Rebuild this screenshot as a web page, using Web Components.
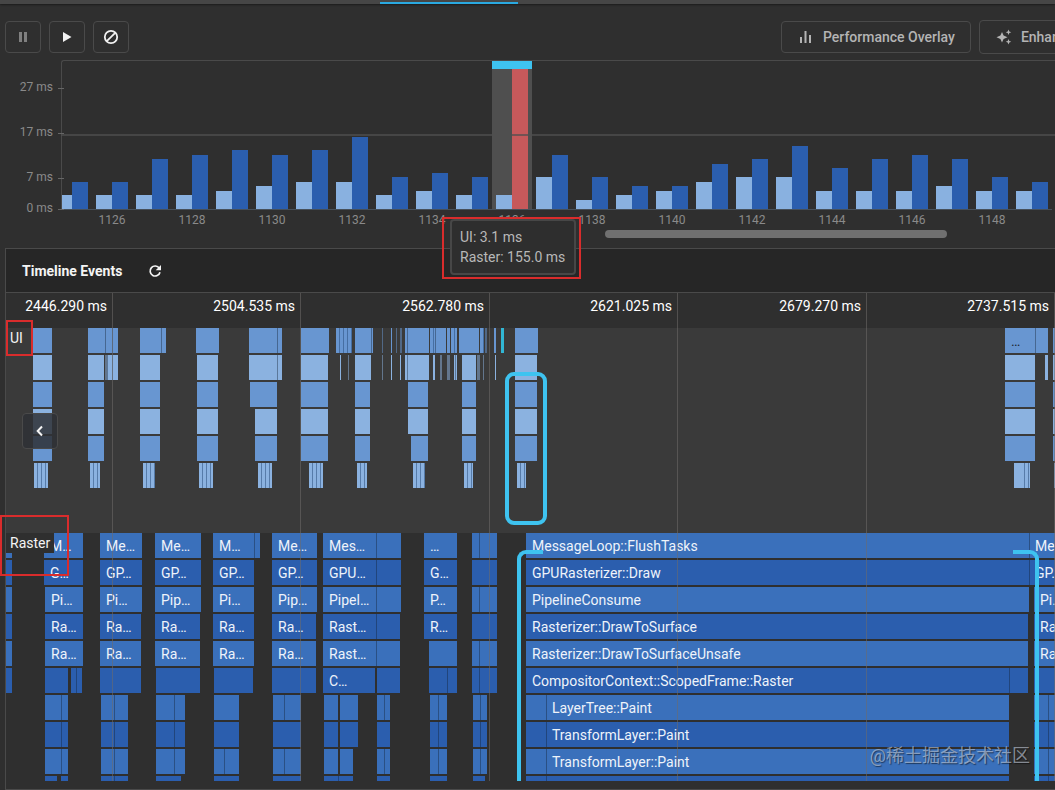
<!DOCTYPE html>
<html lang="en">
<head>
<meta charset="utf-8">
<title>Performance</title>
<style>
  :root {
    --bg: #2f2f2f;
    --line: #4a4a4a;
    --muted: #8a8a8a;
    --accent: #3ec3f0;
    --alert: #d92c2c;
    --ruler: 107px 188px 189px 188px 189px 188px;
  }
  html, body {
    margin: 0;
    height: 100%;
    overflow: hidden;
    background: var(--bg);
    font-family: Roboto, "Noto Sans CJK SC", sans-serif;
    font-size: 14px;
  }
</style>
</head>
<body>
<perf-page></perf-page>

<script>
class TabStrip extends HTMLElement {
  constructor() {
    super()
    this.attachShadow({mode: "open"}).innerHTML = `
      <style>
        :host {
          display: grid;
          grid-template-columns: 380fr 138fr 537fr;
          align-items: end;
          height: 4px;
          background: #464646;
          box-shadow: 0 1px 2px #1c1c1c;
        }
        span {
          grid-column: 2;
          height: 2px;
          background: #2aa9e0;
        }
      </style>
      <span></span>
    `
  }
}
customElements.define("tab-strip", TabStrip)

class ToolButton extends HTMLElement {
  constructor() {
    super()
    this.attachShadow({mode: "open"}).innerHTML = `
      <style>
        :host { display: block; flex: none; }
        button {
          display: flex;
          align-items: center;
          justify-content: center;
          gap: 8px;
          box-sizing: border-box;
          min-width: 36px;
          height: var(--tool-height, 32px);
          padding: 0 var(--tool-pad, 0);
          border: 1px solid var(--line);
          border-radius: 4px;
          background: var(--tool-bg, transparent);
          color: inherit;
          font: 500 14px Roboto, sans-serif;
          white-space: nowrap;
          cursor: pointer;
        }
      </style>
      <button aria-label="${this.getAttribute("label")}"><slot></slot></button>
    `
  }
}
customElements.define("tool-button", ToolButton)

class ToolBar extends HTMLElement {
  constructor() {
    super()
    this.attachShadow({mode: "open"}).innerHTML = `
      <style>
        :host {
          display: flex;
          justify-content: space-between;
          align-items: center;
          height: 34px;
          padding: 16px 0 6px 5px;
          color: #f2f2f2;
        }
        div { display: flex; align-items: center; gap: 8px; }
        .extra {
          flex: none;
          width: 274px;
          color: #b4b4b4;
          --tool-pad: 15px;
        }
        .off { color: #808080; }
        .tall { --tool-height: 34px; }
        svg { display: block; fill: currentColor; }
      </style>
      <div>
        <tool-button label="Pause" class="off">
          <svg width="18" height="18" viewBox="0 0 18 18"><path d="M5 4h3v10H5zM10 4h3v10h-3z"/></svg>
        </tool-button>
        <tool-button label="Resume">
          <svg width="18" height="18" viewBox="0 0 18 18"><path d="M5 4l8.5 5L5 14z"/></svg>
        </tool-button>
        <tool-button label="Clear">
          <svg width="18" height="18" viewBox="0 0 18 18"><g fill="none" stroke="currentColor" stroke-width="1.8"><circle cx="9" cy="9" r="6.2"/><path d="M4.8 13.2l8.4-8.4"/></g></svg>
        </tool-button>
      </div>
      <div class="extra">
        <tool-button label="Performance Overlay">
          <svg width="18" height="18" viewBox="0 0 18 18"><path d="M3 9h2v6H3zM7.500 3h2v12h-2zM12 7h2v8h-2z"/></svg>
          Performance Overlay
        </tool-button>
        <tool-button label="Enhance Tracing" class="tall">
          <svg width="18" height="18" viewBox="0 0 18 18"><path d="M7 4l1.600 3.600L12.500 9.200 8.600 10.900 7 14.500 5.400 10.900 1.500 9.200 5.400 7.600zM13.500 1.500l.8 2 2 .8-2 .8-.8 2-.8-2-2-.8 2-.8zM13.500 11l.8 2 2 .8-2 .8-.8 2-.8-2-2-.8 2-.8z"/></svg>
          Enhance Tracing
        </tool-button>
      </div>
    `
  }
}
customElements.define("tool-bar", ToolBar)

class FrameTooltip extends HTMLElement {
  constructor() {
    super()
    this.attachShadow({mode: "open"}).innerHTML = `
      <style>
        :host {
          display: block;
          border: 2px solid var(--alert);
          padding: 0 3px 2px 6px;
        }
        div {
          border: 2px solid #474747;
          border-radius: 4px;
          padding: 6px 9px 6px 8px;
          background: #2e2e2e;
          color: #b8b8b8;
          line-height: 20px;
          white-space: nowrap;
        }
        ::slotted(p) { margin: 0; }
      </style>
      <div><slot></slot></div>
    `
  }
}
customElements.define("frame-tooltip", FrameTooltip)

// frame number, UI bar height, raster bar height
const FRAMES = [
  [1125, 14, 27], [1126, 14, 27], [1127, 14, 50], [1128, 14, 54], [1129, 18, 59],
  [1130, 23, 54], [1131, 27, 59], [1132, 27, 72], [1133, 14, 32], [1134, 18, 36],
  [1135, 14, 32], [1136, 14, 140], [1137, 32, 54], [1138, 9, 32], [1139, 14, 23],
  [1140, 18, 23], [1141, 27, 45], [1142, 32, 50], [1143, 32, 63], [1144, 18, 41],
  [1145, 18, 50], [1146, 18, 54], [1147, 23, 50], [1148, 18, 32], [1149, 18, 27],
]
const SELECTED = 1136

class FrameChart extends HTMLElement {
  constructor() {
    super()
    this.attachShadow({mode: "open"})
    this.render()
  }

  frame([id, ui, raster]) {
    return `
      <div class="frame">
        <div class="bars ${id === SELECTED ? "selected" : ""}">
          <i class="ui" style="height:${ui}px"></i><i class="raster" style="height:${raster}px"></i>
        </div>
        ${id % 2 ? "" : `<span>${id}</span>`}
      </div>`
  }

  render() {
    this.shadowRoot.innerHTML = `
      <style>
        :host {
          display: block;
          position: relative;
          color: var(--muted);
          padding-bottom: 10px;
        }
        .chart {
          display: grid;
          grid-template-columns: 64px minmax(0, 1fr);
        }
        .axis {
          display: flex;
          flex-direction: column;
          padding-top: 4px;
          z-index: 1;
          font-size: 12px;
        }
        .axis div {
          display: flex;
          align-items: flex-end;
          justify-content: flex-end;
          gap: 5px;
          height: 45px;
          line-height: 14px;
        }
        .axis div:first-child { height: 30px; }
        .axis div:last-child { height: 31px; }
        .axis i {
          width: 6px;
          height: 1px;
          margin-bottom: 5px;
          background: #666;
        }
        .plot {
          position: relative;
          margin-left: -3px;
          padding: 1px 0 0 1px;
          display: flex;
          overflow: hidden;
        }
        .plot::before {
          content: "";
          position: absolute;
          inset: 0 0 auto 0;
          height: 148px;
          border-left: 1px solid var(--line);
          border-top: 1px solid var(--line);
          border-top-left-radius: 3px;
        }
        .frames {
          display: flex;
          margin-left: -10px;
        }
        .frame {
          flex: none;
          width: 40px;
          font-size: 12px;
          line-height: 20px;
          text-align: center;
          height: 169px;
        }
        .bars {
          display: flex;
          align-items: flex-end;
          justify-content: center;
          height: 148px;
          border-bottom: 1px solid #46505a;
        }
        .bars.selected {
          box-sizing: border-box;
          height: 149px;
          border-top: 8px solid var(--accent);
          background: #4f4f4f;
        }
        .bars i { width: 16px; }
        .ui { background: #89b1e0; }
        .raster { background: #2b5eae; }
        .selected .raster { background: #c6595b; }
        .budget {
          position: absolute;
          left: 0;
          right: 0;
          top: 74px;
          height: 2px;
          background: rgba(80, 80, 80, .7);
        }
        .scroll {
          display: grid;
          grid-template-columns: 605fr 342fr 108fr;
        }
        .scroll i {
          grid-column: 2;
          height: 8px;
          border-radius: 4px;
          background: #707070;
        }
        frame-tooltip {
          position: absolute;
          left: 442px;
          top: 157px;
          z-index: 3;
        }
      </style>
      <div class="chart">
        <div class="axis">
          ${["27 ms", "17 ms", "7 ms", "0 ms"].map((t) => `<div>${t}<i></i></div>`).join("")}
        </div>
        <div class="plot">
          <div class="frames">${FRAMES.map((f) => this.frame(f)).join("")}</div>
          <div class="budget"></div>
        </div>
      </div>
      <div class="scroll"><i></i></div>
      <frame-tooltip><p>UI: 3.1 ms</p><p>Raster: 155.0 ms</p></frame-tooltip>
    `
  }
}
customElements.define("frame-chart", FrameChart)

// Events are [start, end, text or kind]. "|" draws a packed run of short calls,
// "-" a faint sliver and "*" the selected one.
const UI_ROWS = [
  [[33, 52], [88, 105], [106, 112], [113, 118], [140, 161], [162, 166], [196, 219],
   [249, 277], [278, 282], [301, 329], [336, 352, "|"], [355, 371], [372, 373], [382, 383, "-"],
   [391, 392], [396, 397, "-"], [400, 402, "-"], [405, 407], [408, 429], [430, 435, "|"], [436, 446],
   [447, 450, "|"], [451, 457, "|"], [459, 479], [480, 484, "|"], [485, 487, "-"],
   [494, 496], [501, 504, "*"], [515, 538], [1005, 1035, "…"], [1036, 1048], [1053, 1080]],
  [[33, 52], [88, 104], [105, 107, "-"], [108, 112], [113, 118], [140, 160], [197, 218],
   [249, 277], [278, 282], [301, 328], [340, 341], [348, 349, "-"], [355, 371], [382, 383, "-"],
   [391, 392], [400, 401], [405, 407], [408, 429], [433, 435], [440, 442, "-"], [447, 450, "-"],
   [454, 455], [456, 457], [462, 476], [477, 480, "-"], [483, 484, "-"], [495, 496],
   [515, 537], [1005, 1035], [1045, 1048], [1053, 1080]],
  [[33, 52], [88, 104], [140, 160], [197, 218], [250, 277], [301, 328], [355, 370],
   [408, 428], [462, 476], [515, 537], [1005, 1035], [1053, 1080]],
  [[33, 52], [88, 104], [140, 160], [197, 218], [255, 277], [301, 328], [355, 370],
   [408, 428], [462, 476], [515, 537], [1005, 1035], [1053, 1080]],
  [[33, 52], [88, 104], [140, 160], [197, 218], [255, 277], [301, 328], [355, 370],
   [411, 428], [462, 476], [515, 537], [1005, 1035], [1053, 1080]],
  [[34, 48, "|"], [90, 100, "|"], [143, 155, "|"], [199, 213, "|"], [258, 272, "|"],
   [309, 323, "|"], [357, 367, "|"], [413, 425, "|"], [464, 473, "|"], [517, 526, "|"],
   [1014, 1021], [1021, 1030, "|"], [1054, 1080]],
]

const RASTER_ROWS = [
  [[6, 12], [44, 83, "M…"], [100, 142, "Me…"], [155, 201, "Me…"], [213, 254, "M…"], [255, 260],
   [272, 317, "Me…"], [323, 376, "Mes…"], [377, 401], [424, 457, "…"], [472, 479], [480, 497],
   [526, 1029, "MessageLoop::FlushTasks"], [1030, 1080, "Me…"]],
  [[6, 12], [44, 83, "G…"], [100, 142, "GP…"], [155, 201, "GP…"], [213, 254, "GP…"],
   [272, 317, "GP…"], [323, 376, "GPU…"], [377, 401], [424, 457, "G…"], [472, 497],
   [526, 1029, "GPURasterizer::Draw"], [1030, 1080, "GP…"]],
  [[6, 12], [45, 83, "Pi…"], [100, 142, "Pi…"], [155, 201, "Pip…"], [213, 254, "Pi…"],
   [272, 317, "Pip…"], [323, 376, "Pipel…"], [377, 401], [424, 457, "P…"], [472, 479], [480, 497],
   [526, 1029, "PipelineConsume"], [1034, 1080, "Pi…"]],
  [[6, 12], [45, 83, "Ra…"], [100, 141, "Ra…"], [155, 200, "Ra…"], [213, 254, "Ra…"],
   [272, 316, "Ra…"], [323, 376, "Rast…"], [377, 400], [424, 457, "R…"], [472, 497],
   [526, 1028, "Rasterizer::DrawToSurface"], [1034, 1080, "Ra…"]],
  [[6, 12], [45, 83, "Ra…"], [100, 141, "Ra…"], [155, 200, "Ra…"], [213, 254, "Ra…"],
   [272, 316, "Ra…"], [323, 376, "Rast…"], [377, 400], [429, 457], [472, 479], [480, 497],
   [526, 1028, "Rasterizer::DrawToSurfaceUnsafe"], [1034, 1080, "Ra…"]],
  [[6, 12], [45, 68], [71, 76], [77, 82], [100, 141], [156, 200], [214, 253],
   [272, 316], [323, 375, "C…"], [377, 400], [429, 447], [448, 457], [472, 479], [480, 497],
   [526, 1009, "CompositorContext::ScopedFrame::Raster"], [1010, 1028], [1034, 1080]],
  [[45, 61], [62, 68], [101, 114], [115, 128], [156, 174], [175, 185], [214, 239],
   [273, 284], [285, 301], [324, 338], [340, 358], [377, 384], [385, 390], [430, 438], [439, 447],
   [473, 480], [481, 487], [526, 546], [547, 1009, "LayerTree::Paint"], [1034, 1048], [1049, 1080]],
  [[45, 61], [62, 68], [101, 114], [115, 128], [156, 174], [175, 185], [214, 239],
   [273, 301], [324, 338], [340, 358], [377, 390], [430, 438], [439, 447],
   [473, 480], [481, 487], [526, 546], [547, 1009, "TransformLayer::Paint"], [1034, 1048], [1049, 1080]],
  [[45, 61], [62, 68], [101, 114], [115, 128], [156, 174], [175, 185], [214, 224], [225, 239],
   [273, 284], [285, 301], [324, 338], [340, 353], [377, 384], [385, 390], [430, 438], [439, 447],
   [473, 480], [481, 487], [526, 546], [547, 1009, "TransformLayer::Paint"], [1034, 1048], [1049, 1080]],
  [[45, 57], [61, 68], [101, 114], [115, 128], [156, 181], [214, 239], [273, 301],
   [324, 338], [339, 353], [377, 390], [430, 447], [473, 485], [526, 546], [547, 1009],
   [1034, 1048], [1049, 1080]],
]

const LANES = {ui: UI_ROWS, raster: RASTER_ROWS}
const LANE_ORIGIN = 6
const KINDS = {"|": "packed", "-": "faint", "*": "current"}

class TraceLane extends HTMLElement {
  constructor() {
    super()
    this.attachShadow({mode: "open"})
    this.render()
  }

  row(events) {
    let end = LANE_ORIGIN
    const blocks = events.map(([from, to, text = ""]) => {
      let kind = KINDS[text] || ""
      const label = text && !kind ? `<span>${text}</span>` : ""
      // calls that follow each other directly share a thin divider
      if (from - end === 1 && !kind) {
        kind = "joined"
        from = end
      }
      const gap = from - end
      end = to
      return `<div class="event ${kind}" style="margin-left:${gap}px;width:${to - from}px">${label}</div>`
    })
    return `<div class="row">${blocks.join("")}</div>`
  }

  render() {
    this.shadowRoot.innerHTML = `
      <style>
        :host {
          display: block;
          position: relative;
          box-sizing: border-box;
          overflow: hidden;
          background: var(--lane-bg);
          color: var(--event-text);
        }
        .row {
          display: flex;
          height: 25px;
          margin-bottom: 2px;
        }
        .event {
          flex: none;
          box-sizing: border-box;
          background-color: var(--tone-a);
          line-height: 26px;
          white-space: nowrap;
          overflow: hidden;
        }
        .event span { padding-left: 6px; }
        .event.joined { border-left: 1px solid rgba(20, 32, 50, .4); }
        .event.joined span { padding-left: 5px; }
        .row:nth-of-type(even) .event { background-color: var(--tone-b); }
        .event.packed {
          background-image: repeating-linear-gradient(90deg, transparent 0 3px, rgba(35, 70, 115, .5) 3px 4px);
        }
        .event.faint { opacity: .5; }
        .row .event.current { background-color: #31b6d4; }
        h3 {
          position: absolute;
          left: 0;
          top: 0;
          margin: 0;
          padding: 0 4px;
          background: var(--lane-bg);
          color: #f4f4f4;
          font-size: 14px;
          font-weight: 400;
          line-height: 20px;
        }
      </style>
      ${LANES[this.getAttribute("kind")].map((r) => this.row(r)).join("")}
      <h3><slot></slot></h3>
    `
  }
}
customElements.define("trace-lane", TraceLane)

class TimelinePanel extends HTMLElement {
  constructor() {
    super()
    this.attachShadow({mode: "open"})
    this.render()
  }

  render() {
    const times = ["2446.290 ms", "2504.535 ms", "2562.780 ms", "2621.025 ms", "2679.270 ms", "2737.515 ms"]
    this.shadowRoot.innerHTML = `
      <style>
        :host {
          display: flex;
          flex-direction: column;
          border: 1px solid var(--line);
          border-right: 0;
          padding-bottom: 8px;
          margin-left: 5px;
          min-height: 0;
          color: #f4f4f4;
        }
        header {
          display: flex;
          align-items: center;
          gap: 24px;
          height: 43px;
          padding-left: 16px;
          background: #262626;
          border-bottom: 1px solid var(--line);
        }
        h2 {
          margin: 0;
          font-size: 14px;
          font-weight: 700;
        }
        header button {
          border: 0;
          padding: 0;
          background: none;
          color: inherit;
          cursor: pointer;
        }
        svg { display: block; }
        .body {
          flex: 1;
          display: flex;
          flex-direction: column;
          position: relative;
          min-height: 0;
        }
        .ruler, .lines {
          display: grid;
          grid-template-columns: var(--ruler);
        }
        .ruler {
          height: 35px;
          line-height: 26px;
          text-align: right;
          color: #fff;
        }
        .ruler span { padding-right: 6px; }
        .lines {
          position: absolute;
          inset: 0;
          overflow: hidden;
          pointer-events: none;
        }
        .lines i { border-right: 1px solid rgba(112, 108, 106, .55); }
        trace-lane[kind="ui"] {
          flex: none;
          height: 205px;
          --lane-bg: #3a3a3a;
          --tone-a: #6896d1;
          --tone-b: #8bb2e0;
          --event-text: #1c2733;
        }
        trace-lane[kind="raster"] {
          flex: 1;
          --lane-bg: #2f2f2f;
          --tone-a: #3a70bb;
          --tone-b: #2b5eae;
          --event-text: #eef3fa;
        }
        .back {
          position: absolute;
          left: 16px;
          top: 120px;
          --tool-height: 36px;
          --tool-bg: rgba(47, 49, 54, .85);
        }
        .mark {
          position: absolute;
          box-sizing: border-box;
          border: 2px solid var(--alert);
          pointer-events: none;
        }
        .mark.ui { left: 0; top: 27px; width: 27px; height: 36px; }
        .mark.raster { left: -6px; top: 222px; width: 69px; height: 61px; }
        .mark.call {
          left: 499px; top: 79px; width: 42px; height: 153px;
          border: 4px solid var(--accent);
          border-radius: 9px;
        }
        .mark.from, .mark.to {
          top: 257px; bottom: 0; width: 26px;
          border: 0 solid var(--accent);
          border-top-width: 4px;
        }
        .mark.from { left: 511px; border-left-width: 4px; border-top-left-radius: 9px; }
        .mark.to { left: 1007px; border-right-width: 4px; border-top-right-radius: 9px; }
      </style>
      <header>
        <h2>Timeline Events</h2>
        <button aria-label="Refresh">
          <svg width="18" height="18" viewBox="0 0 18 18">
            <path d="M13.300 6.200A5 5 0 1 0 14 10.200" fill="none" stroke="currentColor" stroke-width="1.700"/>
            <path d="M15 3v5.300H9.700z" fill="currentColor"/>
          </svg>
        </button>
      </header>
      <div class="body">
        <div class="ruler">${times.map((t) => `<span>${t}</span>`).join("")}</div>
        <trace-lane kind="ui">UI</trace-lane>
        <trace-lane kind="raster">Raster</trace-lane>
        <div class="lines">${times.map(() => "<i></i>").join("")}</div>
        <tool-button class="back" label="Previous frame">
          <svg width="18" height="18" viewBox="0 0 18 18"><path d="M11 4.500L6.700 9l4.300 4.500" fill="none" stroke="currentColor" stroke-width="2"/></svg>
        </tool-button>
        <div class="mark ui"></div>
        <div class="mark raster"></div>
        <div class="mark call"></div>
        <div class="mark from"></div>
        <div class="mark to"></div>
      </div>
    `
  }
}
customElements.define("timeline-panel", TimelinePanel)

class PerfPage extends HTMLElement {
  constructor() {
    super()
    this.attachShadow({mode: "open"}).innerHTML = `
      <style>
        :host {
          display: flex;
          flex-direction: column;
          position: relative;
          height: 100vh;
        }
        timeline-panel { flex: 1; }
        .credit {
          position: absolute;
          right: 25px;
          bottom: 20px;
          font-size: 18px;
          line-height: 28px;
          color: rgba(190, 198, 212, .65);
          text-shadow: 1px 1px 1px rgba(0, 0, 0, .5);
        }
      </style>
      <tab-strip></tab-strip>
      <tool-bar></tool-bar>
      <frame-chart></frame-chart>
      <timeline-panel></timeline-panel>
      <div class="credit">@稀土掘金技术社区</div>
    `
  }
}
customElements.define("perf-page", PerfPage)
</script>
</body>
</html>
